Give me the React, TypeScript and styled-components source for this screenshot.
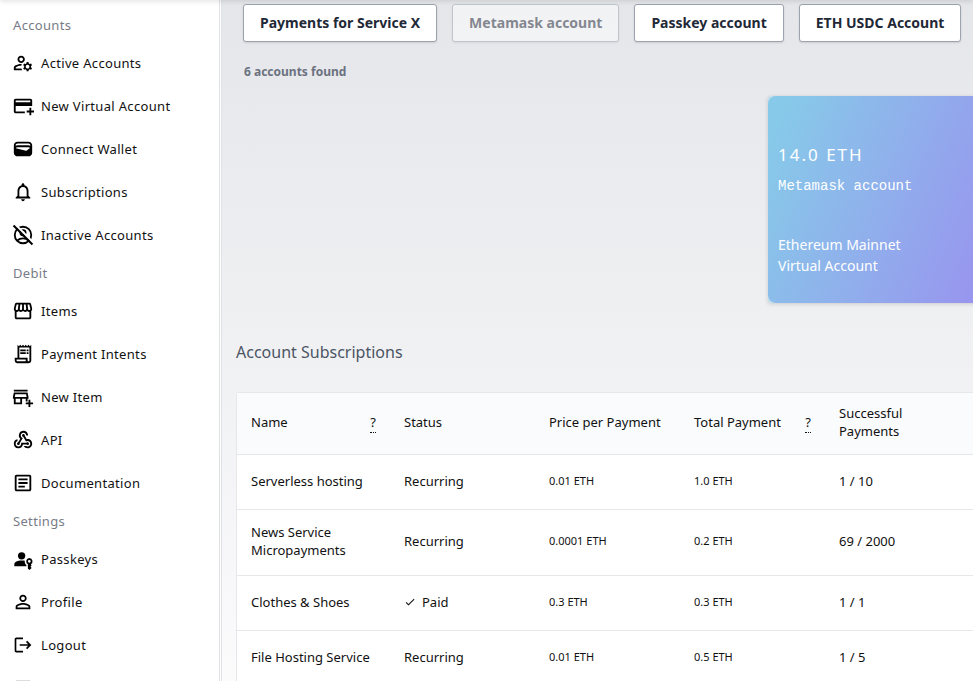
import React from 'react';
import styled, { createGlobalStyle } from 'styled-components';
import type { IconType } from 'react-icons';
import {
  MdOutlineManageAccounts,
  MdOutlineAddCard,
  MdNotificationsNone,
  MdOutlineStorefront,
  MdOutlineReceiptLong,
  MdOutlineAddBusiness,
  MdWebhook,
  MdOutlineArticle,
  MdOutlinePersonOutline,
  MdLogout,
  MdCheck,
} from 'react-icons/md';

const GlobalStyle = createGlobalStyle`
  *, *::before, *::after { box-sizing: border-box; }
  body {
    margin: 0;
    background: #fff;
    color: #111;
    font-family: "Noto Sans", sans-serif;
    font-size: 13px;
    line-height: 18px;
  }
`;

const Page = styled.div`
  display: flex;
  height: 100vh;
  overflow: hidden;
  position: relative;
  &::before {
    content: '';
    position: absolute;
    inset: -4px 0 auto;
    height: 4px;
    box-shadow: 0 1px 5px rgba(0, 0, 0, 0.15);
  }
`;

const Sidebar = styled.nav`
  flex: 0 0 220px;
  padding: 9px 12px 0;
  overflow: hidden;
  background: #fff;
  border-right: 1px solid #dfe1e5;
`;

const NavGroup = styled.section`
  margin-bottom: 1px;
`;

const GroupTitle = styled.h2`
  margin: 0;
  padding-left: 1px;
  font-size: 13px;
  font-weight: 400;
  line-height: 32px;
  letter-spacing: 0.025em;
  color: #787c87;
`;

const NavList = styled.ul`
  margin: 0;
  padding: 0;
  list-style: none;
`;

const NavLink = styled.a`
  display: flex;
  align-items: center;
  gap: 7px;
  height: 43px;
  color: #111;
  font-size: 13px;
  letter-spacing: 0.025em;
  text-decoration: none;
  white-space: nowrap;
`;

const IconSlot = styled.span`
  display: flex;
  flex: 0 0 22px;
  justify-content: center;
  color: #000;
`;

const FadedIcon = styled.div`
  display: flex;
  align-items: center;
  height: 43px;
  color: #777;
`;

const Main = styled.main`
  flex: 1;
  min-width: 0;
  margin-left: 1px;
  padding: 4px 0 0 14px;
  overflow: hidden;
  border-left: 1px solid #e0e2e6;
  background: linear-gradient(#e5e6ea, #fbfbfc);
`;

const AccountTabs = styled.div`
  display: flex;
  gap: 15px;
  padding-left: 7px;
`;

const AccountButton = styled.button`
  flex: none;
  height: 38px;
  padding: 0 16px;
  border: 1px solid #9ca3af;
  border-radius: 3px;
  background: #fff;
  box-shadow: 0 1px 2px rgba(0, 0, 0, 0.12);
  color: #1f2937;
  font-family: inherit;
  font-size: 14px;
  font-weight: 700;
  line-height: 20px;
  &:disabled {
    opacity: 0.5;
  }
`;

const FoundCount = styled.p`
  margin: 20px 0 0 8px;
  color: #6b7280;
  font-size: 12px;
  font-weight: 700;
  line-height: 20px;
`;

const Carousel = styled.div`
  display: flex;
  margin-top: 14px;
  padding-left: 532px;
`;

const CardFrame = styled.article`
  flex: 0 0 342px;
  border-radius: 3px;
  background: #c6e0ee;
  box-shadow: 0 1px 4px rgba(0, 0, 0, 0.16);
`;

const CardFace = styled.div`
  height: 207px;
  padding: 48px 10px 0;
  border-radius: 8px;
  background: linear-gradient(112deg, #87c9e9 5%, #9a90ef 74%, #9370db);
  color: #fff;
  font-size: 14px;
  line-height: 21px;
`;

const Balance = styled.div`
  font-size: 17px;
  line-height: 22px;
  letter-spacing: 2px;
`;

const AccountName = styled.div`
  margin: 10px 0 37px;
  font-family: "Liberation Mono", monospace;
`;

const SectionTitle = styled.h1`
  margin: 37px 0 28px;
  color: #4b5563;
  font-size: 16px;
  font-weight: 400;
  line-height: 24px;
`;

const Table = styled.table`
  width: 1400px;
  table-layout: fixed;
  border-collapse: separate;
  border-spacing: 0;
  border: 1px solid #e5e7eb;
  border-radius: 3px;
  background: #fff;
`;

const Column = styled.col<{ $width?: number }>`
  width: ${(p) => (p.$width ? `${p.$width}px` : 'auto')};
`;

const HeadCell = styled.th`
  height: 62px;
  padding: 11px 14px 14px;
  border-bottom: 1px solid #e5e7eb;
  background: #fafbfd;
  font-weight: 400;
  text-align: left;
`;

const HeadContent = styled.div`
  display: flex;
  align-items: center;
  justify-content: space-between;
`;

const Hint = styled.abbr`
  height: 20px;
  margin: 0 0 -2px;
  border-bottom: 1px dotted #111;
  text-decoration: none;
`;

const Cell = styled.td<{ $small?: boolean }>`
  height: 55px;
  padding: 13px 14px 16px;
  border-bottom: 1px solid #e5e7eb;
  font-size: ${(p) => (p.$small ? 11 : 13)}px;
`;

const Status = styled.span`
  display: flex;
  align-items: center;
  gap: 6px;
`;

interface IconProps {
  size?: number;
}

function PasskeyIcon({ size = 22 }: IconProps) {
  return (
    <svg width={size} height={size} viewBox="0 0 24 24" fill="currentColor" aria-hidden="true">
      <circle cx="10.5" cy="8.5" r="4" />
      <path d="M2.5 20v-2.2c0-2.700 3.800-4.300 8-4.300 1.200 0 2.400.1 3.500.4-.3 1.900.3 3.600 1.700 4.600V20z" />
      <path
        fillRule="evenodd"
        d="M18.900 11a3.600 3.600 0 0 1 1.700 6.700l.8 1.300-1.200 1.300 1.200 1.500-2.400 2.200-1.700-1.600v-4.700A3.600 3.600 0 0 1 18.900 11zm0 2a1.500 1.500 0 1 0 0 3 1.500 1.500 0 0 0 0-3z"
      />
    </svg>
  );
}

function WalletIcon({ size = 22 }: IconProps) {
  return (
    <svg width={size} height={size} viewBox="0 0 24 24" fill="currentColor" aria-hidden="true">
      <path
        fillRule="evenodd"
        d="M18 4H6C3.790 4 2 5.790 2 8v8c0 2.210 1.790 4 4 4h12c2.210 0 4-1.790 4-4V8c0-2.210-1.790-4-4-4zm-1.860 9.770c-.24.2-.57.28-.88.2L4.150 11.250C4.450 10.520 5.160 10 6 10h12c.67 0 1.260.34 1.630.84l-3.490 2.930zM6 6h12c1.100 0 2 .9 2 2v.55c-.59-.34-1.270-.55-2-.55H6c-.73 0-1.410.21-2 .55V8c0-1.100.9-2 2-2z"
      />
    </svg>
  );
}

function NoAccountIcon({ size = 22 }: IconProps) {
  return (
    <svg width={size} height={size} viewBox="0 0 24 24" fill="none" stroke="currentColor" strokeWidth="2" aria-hidden="true">
      <circle cx="12" cy="12" r="9" />
      <circle cx="12" cy="9.5" r="2.800" />
      <path d="M5.800 18c1.700-1.600 3.800-2.400 6.200-2.400s4.500.8 6.200 2.400" />
      <path d="M3.500 .5l20 20" stroke="#fff" strokeWidth="2.400" />
      <path d="M1.700 1.700l20.600 20.600" strokeWidth="2.200" />
    </svg>
  );
}

interface NavItem {
  label: string;
  icon: IconType | typeof PasskeyIcon;
  size?: number;
}

const groups: { title: string; items: NavItem[] }[] = [
  {
    title: 'Accounts',
    items: [
      { label: 'Active Accounts', icon: MdOutlineManageAccounts },
      { label: 'New Virtual Account', icon: MdOutlineAddCard },
      { label: 'Connect Wallet', icon: WalletIcon },
      { label: 'Subscriptions', icon: MdNotificationsNone },
      { label: 'Inactive Accounts', icon: NoAccountIcon },
    ],
  },
  {
    title: 'Debit',
    items: [
      { label: 'Items', icon: MdOutlineStorefront },
      { label: 'Payment Intents', icon: MdOutlineReceiptLong },
      { label: 'New Item', icon: MdOutlineAddBusiness },
      { label: 'API', icon: MdWebhook },
      { label: 'Documentation', icon: MdOutlineArticle },
    ],
  },
  {
    title: 'Settings',
    items: [
      { label: 'Passkeys', icon: PasskeyIcon },
      { label: 'Profile', icon: MdOutlinePersonOutline },
      { label: 'Logout', icon: MdLogout, size: 20 },
    ],
  },
];

const accounts = [
  { name: 'Payments for Service X' },
  { name: 'Metamask account', selected: true },
  { name: 'Passkey account' },
  { name: 'ETH USDC Account' },
];

const columns = [
  { title: 'Name', width: 153, hint: 'Name given to the subscription' },
  { title: 'Status', width: 145 },
  { title: 'Price per Payment', width: 145 },
  { title: 'Total Payment', width: 145, hint: 'Sum of all payments' },
  { title: 'Successful Payments', width: 145 },
  { title: '' },
];

const subscriptions = [
  { name: 'Serverless hosting', status: 'Recurring', price: '0.01 ETH', total: '1.0 ETH', count: '1 / 10' },
  { name: 'News Service Micropayments', status: 'Recurring', price: '0.0001 ETH', total: '0.2 ETH', count: '69 / 2000' },
  { name: 'Clothes & Shoes', status: 'Paid', price: '0.3 ETH', total: '0.3 ETH', count: '1 / 1' },
  { name: 'File Hosting Service', status: 'Recurring', price: '0.01 ETH', total: '0.5 ETH', count: '1 / 5' },
];

export default function App() {
  return (
    <>
      <GlobalStyle />
      <Page>
        <Sidebar>
          {groups.map((group) => (
            <NavGroup key={group.title}>
              <GroupTitle>{group.title}</GroupTitle>
              <NavList>
                {group.items.map(({ label, icon: Icon, size = 22 }) => (
                  <li key={label}>
                    <NavLink href="#">
                      <IconSlot>
                        <Icon size={size} />
                      </IconSlot>
                      {label}
                    </NavLink>
                  </li>
                ))}
              </NavList>
            </NavGroup>
          ))}
          <FadedIcon>
            <MdOutlineArticle size={22} />
          </FadedIcon>
        </Sidebar>
        <Main>
          <AccountTabs>
            {accounts.map((account) => (
              <AccountButton key={account.name} type="button" disabled={account.selected}>
                {account.name}
              </AccountButton>
            ))}
          </AccountTabs>
          <FoundCount>6 accounts found</FoundCount>
          <Carousel>
            <CardFrame>
              <CardFace>
                <Balance>14.0 ETH</Balance>
                <AccountName>Metamask account</AccountName>
                <div>Ethereum Mainnet</div>
                <div>Virtual Account</div>
              </CardFace>
            </CardFrame>
          </Carousel>
          <SectionTitle>Account Subscriptions</SectionTitle>
          <Table>
            <colgroup>
              {columns.map((column) => (
                <Column key={column.title} $width={column.width} />
              ))}
            </colgroup>
            <thead>
              <tr>
                {columns.map((column) => (
                  <HeadCell key={column.title} scope="col">
                    <HeadContent>
                      {column.title}
                      {column.hint && <Hint title={column.hint}>?</Hint>}
                    </HeadContent>
                  </HeadCell>
                ))}
              </tr>
            </thead>
            <tbody>
              {subscriptions.map((row) => (
                <tr key={row.name}>
                  <Cell>{row.name}</Cell>
                  <Cell>
                    <Status>
                      {row.status === 'Paid' && <MdCheck size={12} />}
                      {row.status}
                    </Status>
                  </Cell>
                  <Cell $small>{row.price}</Cell>
                  <Cell $small>{row.total}</Cell>
                  <Cell>{row.count}</Cell>
                  <Cell />
                </tr>
              ))}
            </tbody>
          </Table>
        </Main>
      </Page>
    </>
  );
}
